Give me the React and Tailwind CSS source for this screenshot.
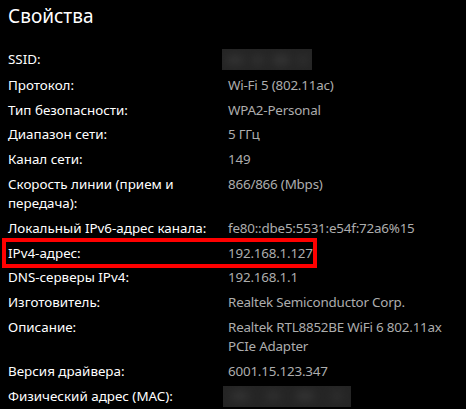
import React from "react";

const rows = [
  { label: "SSID:", value: "__ssid" },
  { label: "Протокол:", value: "Wi-Fi 5 (802.11ac)" },
  { label: "Тип безопасности:", value: "WPA2-Personal" },
  { label: "Диапазон сети:", value: "5 ГГц" },
  { label: "Канал сети:", value: "149" },
  { label: ["Скорость линии (прием и", "передача):"], value: "866/866 (Mbps)" },
  { label: "Локальный IPv6-адрес канала:", value: "fe80::dbe5:5531:e54f:72a6%15" },
  { label: "IPv4-адрес:", value: "192.168.1.127" },
  { label: "DNS-серверы IPv4:", value: "192.168.1.1" },
  { label: "Изготовитель:", value: "Realtek Semiconductor Corp." },
  { label: "Описание:", value: ["Realtek RTL8852BE WiFi 6 802.11ax", "PCIe Adapter"] },
  { label: "Версия драйвера:", value: "6001.15.123.347" },
  { label: "Физический адрес (MAC):", value: "__mac" },
];

function Blur({ w }) {
  return (
    <div
      className="relative h-[21px] overflow-hidden bg-[#252525]"
      style={{ width: w }}
    >
      <div className="absolute inset-0 flex items-center justify-around blur-[4px]">
        <div className="h-[10px] w-[18px] rounded-full bg-[#333333]" />
        <div className="h-[10px] w-[14px] rounded-full bg-[#303030]" />
        <div className="h-[10px] w-[18px] rounded-full bg-[#343434]" />
        <div className="h-[10px] w-[12px] rounded-full bg-[#2f2f2f]" />
      </div>
    </div>
  );
}

function Lines({ v }) {
  if (Array.isArray(v)) {
    return (
      <>
        {v.map((l, i) => (
          <div key={i}>{l}</div>
        ))}
      </>
    );
  }
  return <div>{v}</div>;
}

export default function App() {
  return (
    <div
      className="relative h-[409px] w-[466px] overflow-hidden bg-black pl-[8px]"
      style={{ fontFamily: '"Noto Sans", "Open Sans", sans-serif' }}
    >
      <div className="pt-[2px] text-[19px] leading-[28px] text-white">Свойства</div>
      <div className="mt-[20px] flex flex-col gap-[5.8px] text-[13.4px] leading-[19px]">
        {rows.map((r, i) => (
          <div key={i} className="grid grid-cols-[220px_1fr]">
            <div className="text-white">
              <Lines v={r.label} />
            </div>
            <div className="tracking-[-0.2px] text-[#adadad]">
              {r.value === "__ssid" ? (
                <div className="-ml-[6px] -mt-[1px]">
                  <Blur w={90} />
                </div>
              ) : r.value === "__mac" ? (
                <div className="-ml-[5px] -mt-[1px]">
                  <Blur w={128} />
                </div>
              ) : (
                <Lines v={r.value} />
              )}
            </div>
          </div>
        ))}
      </div>
      <div className="absolute left-[2px] top-[238px] h-[30px] w-[315px] border-[4px] border-[#ff0000]" />
    </div>
  );
}
